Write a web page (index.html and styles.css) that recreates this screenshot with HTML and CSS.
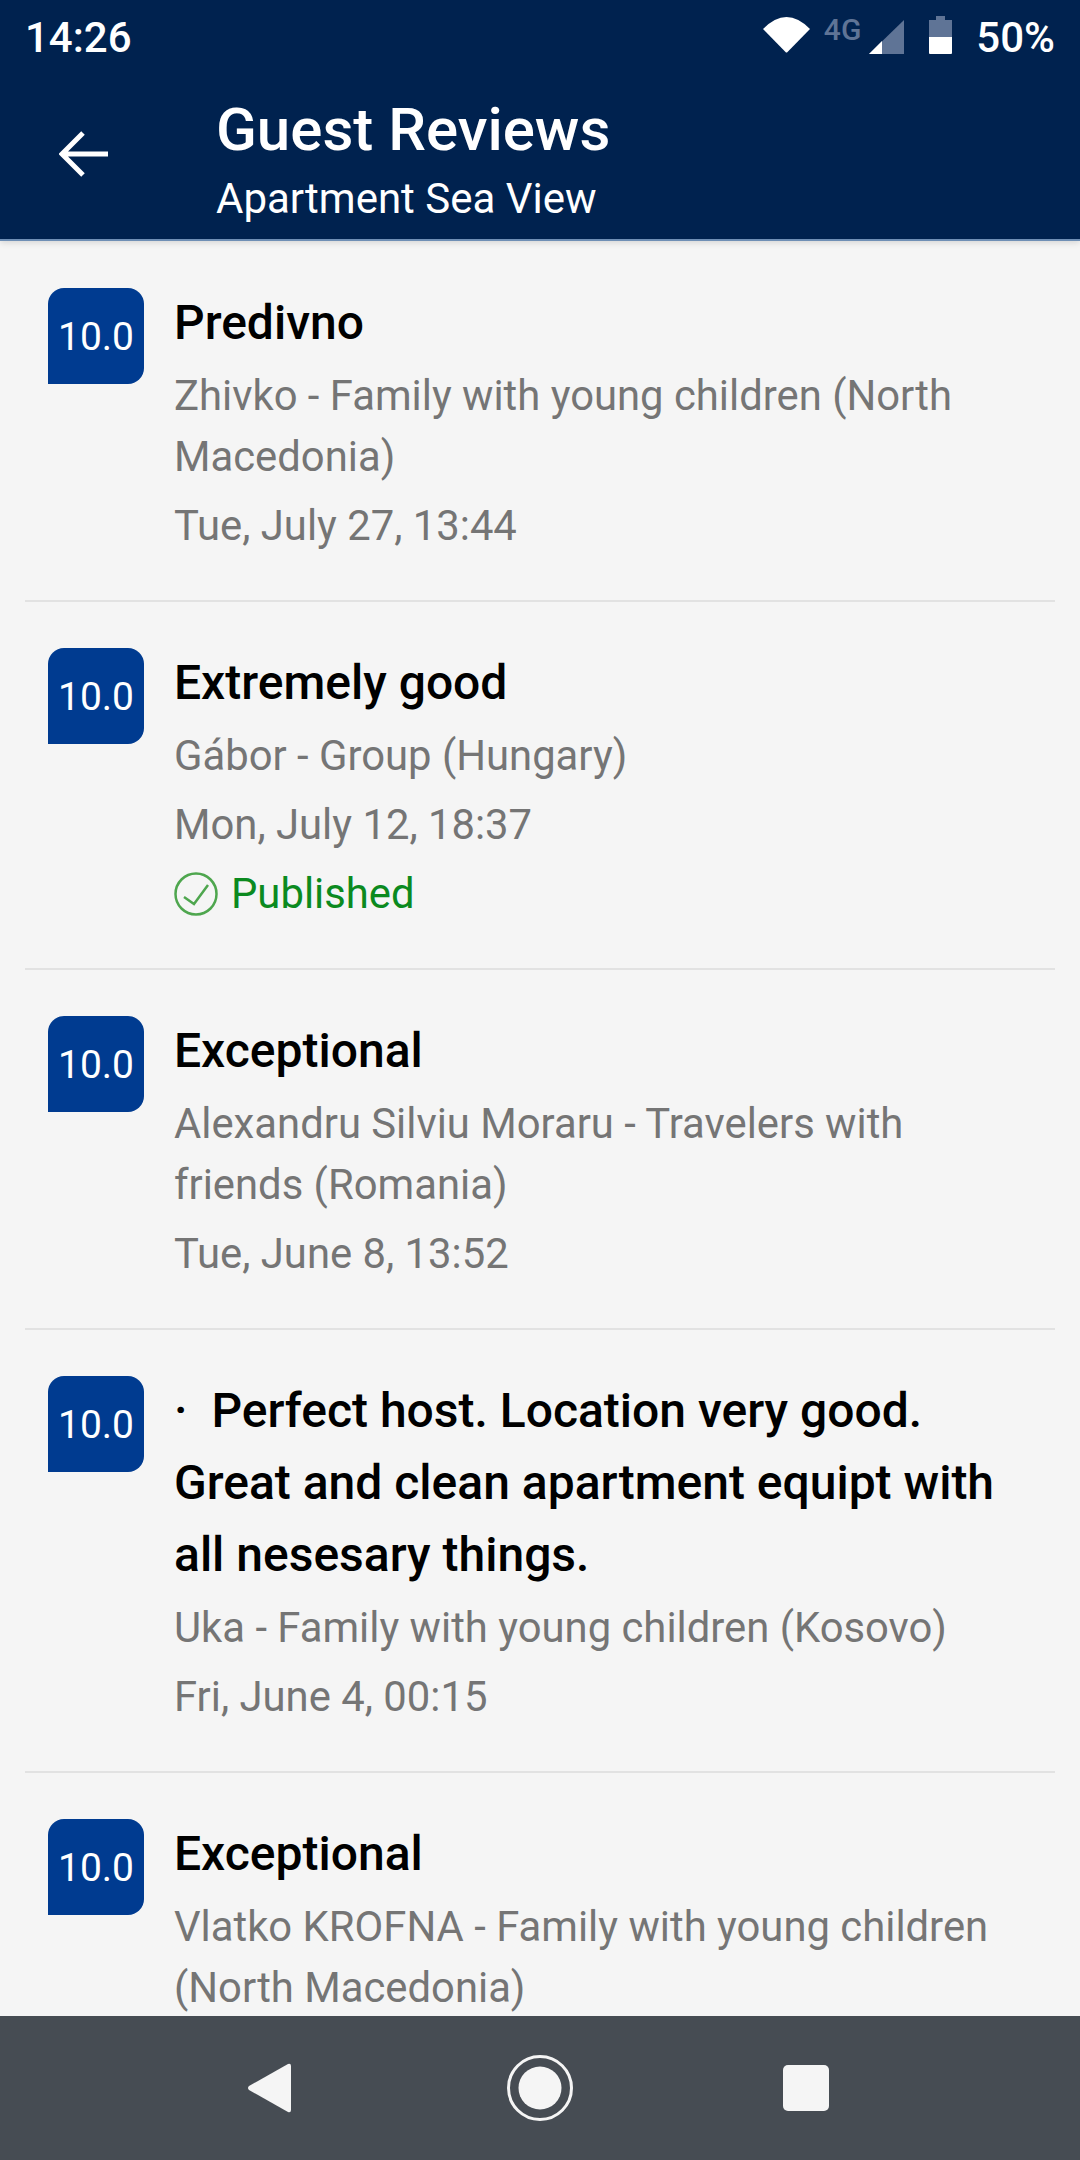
FILE: index.html
```html
<!DOCTYPE html>
<html lang="en">
<head>
  <meta charset="UTF-8" />
  <title>Guest Reviews</title>
  <link rel="stylesheet" href="styles.css">
</head>
<body>
  <div class="screen">
    <header class="top">
      <div class="status-bar">
        <span class="clock">14:26</span>
        <div class="status-icons">
          <svg class="wifi" width="47" height="36" viewBox="0 0 47 36"><path d="M0 12 Q23.5 -12 47 12 L24.5 35 Q23.5 36 22.5 35 Z" fill="#fff"/></svg>
          <span class="net">4G</span>
          <svg class="signal" width="35" height="34" viewBox="0 0 35 34"><path d="M35 0 V34 H0 Z" fill="#5f7496"/><path d="M0 34 L13 21 V34 Z" fill="#fff"/></svg>
          <svg class="battery" width="23" height="38" viewBox="0 0 23 38"><path d="M7 0 H16 V4 H23 V21 H0 V4 H7 Z" fill="#5f7496"/><path d="M0 21 H23 V37 Q23 38 22 38 H1 Q0 38 0 37 Z" fill="#fff"/></svg>
          <span class="percent">50%</span>
        </div>
      </div>
      <div class="toolbar">
        <svg class="back" width="50" height="46" viewBox="0 0 50 46"><path d="M49 23 H3 M24 2 L3 23 L24 44" fill="none" stroke="#fff" stroke-width="5"/></svg>
        <div class="toolbar-text">
          <h1>Guest Reviews</h1>
          <p>Apartment Sea View</p>
        </div>
      </div>
    </header>

    <main class="reviews">
      <div class="review">
        <div class="score">10.0</div>
        <div class="review-body">
          <h2>Predivno</h2>
          <p class="who">Zhivko - Family with young children (North Macedonia)</p>
          <p class="when">Tue, July 27, 13:44</p>
        </div>
      </div>
      <div class="review">
        <div class="score">10.0</div>
        <div class="review-body">
          <h2>Extremely good</h2>
          <p class="who">Gábor - Group (Hungary)</p>
          <p class="when">Mon, July 12, 18:37</p>
          <p class="published">
            <svg width="44" height="44" viewBox="0 0 44 44"><circle cx="22" cy="22" r="20.5" fill="none" stroke="#4ea64e" stroke-width="2.5"/><path d="M10 25 L20 32 L34 13" fill="none" stroke="#4ea64e" stroke-width="2.5"/></svg>
            Published
          </p>
        </div>
      </div>
      <div class="review">
        <div class="score">10.0</div>
        <div class="review-body">
          <h2>Exceptional</h2>
          <p class="who">Alexandru Silviu Moraru - Travelers with friends (Romania)</p>
          <p class="when">Tue, June 8, 13:52</p>
        </div>
      </div>
      <div class="review">
        <div class="score">10.0</div>
        <div class="review-body">
          <h2>·&nbsp; Perfect host. Location very good. Great and clean apartment equipt with all nesesary things.</h2>
          <p class="who">Uka - Family with young children (Kosovo)</p>
          <p class="when">Fri, June 4, 00:15</p>
        </div>
      </div>
      <div class="review">
        <div class="score">10.0</div>
        <div class="review-body">
          <h2>Exceptional</h2>
          <p class="who">Vlatko KROFNA - Family with young children (North Macedonia)</p>
        </div>
      </div>
    </main>

    <footer class="nav-bar">
      <svg class="nav-back" width="44" height="50" viewBox="0 0 44 50"><path d="M41 1 Q44 0 44 3 V47 Q44 50 41 49 L2 27 Q0 25 2 23 Z" fill="#f5f5f5"/></svg>
      <svg width="66" height="66" viewBox="0 0 66 66"><circle cx="33" cy="33" r="31.5" fill="none" stroke="#f5f5f5" stroke-width="3"/><circle cx="33" cy="33" r="21.5" fill="#f5f5f5"/></svg>
      <div class="nav-square"></div>
    </footer>
  </div>
</body>
</html>
```

FILE: styles.css
```css
* {
  margin: 0;
  padding: 0;
  box-sizing: border-box;
}

body {
  width: 1080px;
  height: 2160px;
  overflow: hidden;
  font-family: Roboto, "Liberation Sans", sans-serif;
  background: #f5f5f5;
}

.screen {
  height: 2160px;
  display: flex;
  flex-direction: column;
}

/* Header */
.top {
  height: 241px;
  flex-shrink: 0;
  background: #00224f;
  color: #fff;
  border-bottom: 2px solid #6f8fb5;
  box-shadow: 0 2px 6px rgba(0, 0, 0, 0.12);
  position: relative;
  z-index: 1;
}

.status-bar {
  height: 74px;
  padding: 0 25px;
  display: flex;
  justify-content: space-between;
  align-items: center;
}

.clock,
.percent {
  font-size: 42px;
  font-weight: 500;
}

.status-icons {
  display: flex;
  align-items: center;
}

.wifi {
  margin: -4px 14px 0 0;
}

.net {
  font-size: 30px;
  font-weight: 500;
  color: #5f7496;
  margin: -16px 8px 0 0;
}

.signal {
  margin-right: 25px;
}

.battery {
  margin: -4px 24px 0 0;
}

.toolbar {
  display: flex;
  align-items: center;
  padding: 22px 0 0 59px;
}

.back {
  margin-right: 107px;
  margin-top: -16px;
}

.toolbar-text h1 {
  font-size: 60px;
  font-weight: 500;
  line-height: 68px;
}

.toolbar-text p {
  font-size: 42px;
  line-height: 56px;
  margin-top: 7px;
}

/* Review list */
.reviews {
  flex: 1;
  overflow: hidden;
  padding: 0 25px;
}

.review {
  display: flex;
  padding: 46px 0 44px;
  border-bottom: 2px solid #e2e2e2;
}

.review:first-child {
  padding-top: 47px;
}

.review:last-child {
  border-bottom: none;
}

.score {
  width: 96px;
  height: 96px;
  margin: 0 30px 0 23px;
  padding-top: 2px;
  flex-shrink: 0;
  background: #003b90;
  color: #fff;
  border-radius: 16px 16px 16px 0;
  font-size: 39px;
  display: flex;
  align-items: center;
  justify-content: center;
}

.review-body {
  flex: 1;
  min-width: 0;
  padding-right: 40px;
}

.review-body h2 {
  font-size: 48px;
  font-weight: 500;
  line-height: 72px;
  margin-top: -1px;
  margin-bottom: 6px;
  color: #000;
}

.who,
.when,
.published {
  font-size: 41.8px;
  line-height: 61px;
  color: #757575;
}

.when,
.published {
  margin-top: 8px;
}

.published {
  color: #0b8a1f;
  display: flex;
  align-items: center;
  gap: 13px;
}

/* Android nav bar */
.nav-bar {
  height: 144px;
  flex-shrink: 0;
  background: #464c53;
  display: flex;
  align-items: center;
  padding-left: 247px;
}

.nav-back {
  margin-right: 216px;
}

.nav-square {
  width: 46px;
  height: 46px;
  margin-left: 210px;
  background: #f5f5f5;
  border-radius: 5px;
}
```
